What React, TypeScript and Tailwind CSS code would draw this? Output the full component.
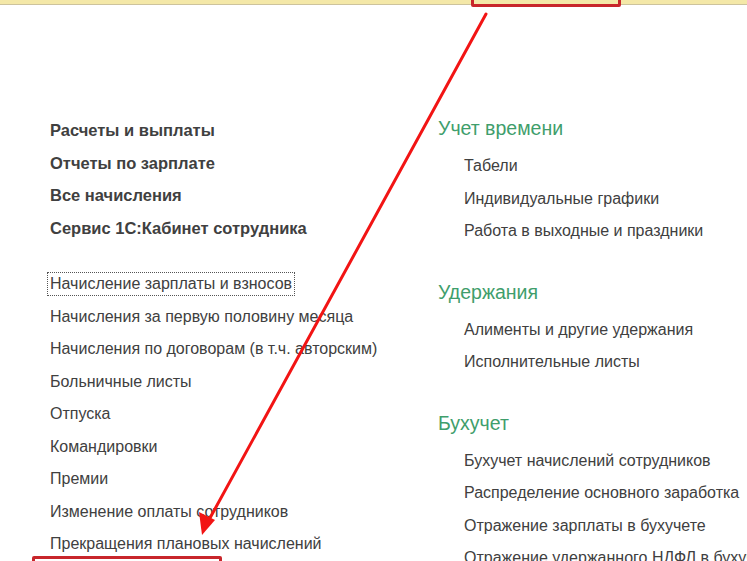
import React from 'react';

const summary = ['Расчеты и выплаты', 'Отчеты по зарплате', 'Все начисления', 'Сервис 1С:Кабинет сотрудника'];

const accruals = [
  'Начисления за первую половину месяца',
  'Начисления по договорам (в т.ч. авторским)',
  'Больничные листы',
  'Отпуска',
  'Командировки',
  'Премии',
  'Изменение оплаты сотрудников',
  'Прекращения плановых начислений',
];

const groups = [
  { title: 'Учет времени', items: ['Табели', 'Индивидуальные графики', 'Работа в выходные и праздники'] },
  { title: 'Удержания', items: ['Алименты и другие удержания', 'Исполнительные листы'] },
  {
    title: 'Бухучет',
    items: [
      'Бухучет начислений сотрудников',
      'Распределение основного заработка',
      'Отражение зарплаты в бухучете',
      'Отражение удержанного НДФЛ в бухучете',
    ],
  },
];

const App = () => {
  return (
    <div className="relative w-[747px] h-[561px] overflow-hidden bg-white font-['Liberation_Sans',Arial,sans-serif] text-[16px] text-[#404040]">
      {/* верхняя панель */}
      <div className="h-[5px] bg-[#f4e8a8] border-b border-[#cdc39c]" />

      <div className="flex">
        {/* левая колонка */}
        <div className="w-[438px] shrink-0 pl-[50px] pt-[109px]">
          <div className="flex flex-col">
            {summary.map((label) => (
              <div key={label} className="h-[32.5px] leading-[32.5px] text-[16.5px] font-bold whitespace-nowrap">
                {label}
              </div>
            ))}
          </div>
          <div className="flex flex-col mt-[24px]">
            <div className="h-[32.5px] flex items-center">
              <span className="-ml-[3px] px-[2px] h-[24px] leading-[22px] border border-dotted border-[#555] whitespace-nowrap">
                Начисление зарплаты и взносов
              </span>
            </div>
            {accruals.map((label) => (
              <div key={label} className="h-[32.5px] leading-[32.5px] whitespace-nowrap">
                {label}
              </div>
            ))}
          </div>
        </div>

        {/* правая колонка */}
        <div className="pt-[107px] flex flex-col gap-[28px] min-w-0">
          {groups.map((group) => (
            <div key={group.title}>
              <div className="h-[32px] leading-[32px] text-[19.5px] text-[#3f9e6c] whitespace-nowrap">{group.title}</div>
              <div className="mt-[6px] pl-[26px] flex flex-col">
                {group.items.map((item) => (
                  <div key={item} className="h-[32.5px] leading-[32.5px] whitespace-nowrap">
                    {item}
                  </div>
                ))}
              </div>
            </div>
          ))}
        </div>
      </div>

      {/* аннотации */}
      <div className="absolute left-[471px] top-[-20px] w-[150px] h-[27px] border-[3px] border-[#c8262b] rounded-[2px]" />
      <div className="absolute left-[32px] top-[556px] w-[190px] h-[30px] border-[3px] border-[#c8262b] rounded-[2px]" />
      <svg className="absolute inset-0 pointer-events-none" width="747" height="561" viewBox="0 0 747 561">
        <line x1="486" y1="14" x2="210" y2="518" stroke="#f21414" strokeWidth="3" strokeLinecap="round" />
        <polygon points="202,535 199,512 215,520" fill="#f21414" />
      </svg>
    </div>
  );
};

export default App;
